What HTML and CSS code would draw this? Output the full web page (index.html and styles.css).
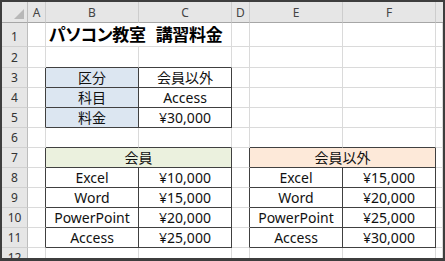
FILE: index.html
```html
<!DOCTYPE html>
<html lang="ja">
<head>
<meta charset="utf-8">
<link rel="stylesheet" href="styles.css">
</head>
<body>
<div class="sheet">
  <!-- header row -->
  <div class="ch corner"><span class="tri"></span></div>
  <div class="ch">A</div>
  <div class="ch">B</div>
  <div class="ch">C</div>
  <div class="ch">D</div>
  <div class="ch">E</div>
  <div class="ch">F</div>
  <div class="ch last"></div>

  <!-- row 1 -->
  <div class="rh">1</div>
  <div class="c"></div>
  <div class="c title span2">パソコン教室<span class="gap">　</span>講習料金</div>
  <div class="c"></div>
  <div class="c"></div>
  <div class="c"></div>
  <div class="c"></div>

  <!-- row 2 -->
  <div class="rh">2</div>
  <div class="c"></div>
  <div class="c kb"></div>
  <div class="c kb"></div>
  <div class="c"></div>
  <div class="c"></div>
  <div class="c"></div>
  <div class="c"></div>

  <!-- row 3 -->
  <div class="rh">3</div>
  <div class="c kr"></div>
  <div class="c k blue">区分</div>
  <div class="c k">会員以外</div>
  <div class="c"></div>
  <div class="c"></div>
  <div class="c"></div>
  <div class="c"></div>

  <!-- row 4 -->
  <div class="rh">4</div>
  <div class="c kr"></div>
  <div class="c k blue">科目</div>
  <div class="c k">Access</div>
  <div class="c"></div>
  <div class="c"></div>
  <div class="c"></div>
  <div class="c"></div>

  <!-- row 5 -->
  <div class="rh">5</div>
  <div class="c kr"></div>
  <div class="c k blue">料金</div>
  <div class="c k">¥30,000</div>
  <div class="c"></div>
  <div class="c"></div>
  <div class="c"></div>
  <div class="c"></div>

  <!-- row 6 -->
  <div class="rh">6</div>
  <div class="c"></div>
  <div class="c kb"></div>
  <div class="c kb"></div>
  <div class="c"></div>
  <div class="c kb"></div>
  <div class="c kb"></div>
  <div class="c"></div>

  <!-- row 7 -->
  <div class="rh">7</div>
  <div class="c kr"></div>
  <div class="c k green span2">会員</div>
  <div class="c kr"></div>
  <div class="c k peach span2">会員以外</div>
  <div class="c"></div>

  <!-- row 8 -->
  <div class="rh">8</div>
  <div class="c kr"></div>
  <div class="c k">Excel</div>
  <div class="c k">¥10,000</div>
  <div class="c kr"></div>
  <div class="c k">Excel</div>
  <div class="c k">¥15,000</div>
  <div class="c"></div>

  <!-- row 9 -->
  <div class="rh">9</div>
  <div class="c kr"></div>
  <div class="c k">Word</div>
  <div class="c k">¥15,000</div>
  <div class="c kr"></div>
  <div class="c k">Word</div>
  <div class="c k">¥20,000</div>
  <div class="c"></div>

  <!-- row 10 -->
  <div class="rh">10</div>
  <div class="c kr"></div>
  <div class="c k">PowerPoint</div>
  <div class="c k">¥20,000</div>
  <div class="c kr"></div>
  <div class="c k">PowerPoint</div>
  <div class="c k">¥25,000</div>
  <div class="c"></div>

  <!-- row 11 -->
  <div class="rh">11</div>
  <div class="c kr"></div>
  <div class="c k">Access</div>
  <div class="c k">¥25,000</div>
  <div class="c kr"></div>
  <div class="c k">Access</div>
  <div class="c k">¥30,000</div>
  <div class="c"></div>

  <!-- row 12 (partial) -->
  <div class="rh cut">12</div>
  <div class="c"></div>
  <div class="c"></div>
  <div class="c"></div>
  <div class="c"></div>
  <div class="c"></div>
  <div class="c"></div>
  <div class="c"></div>
</div>
</body>
</html>
```

FILE: styles.css
```css
html, body {
  margin: 0;
  padding: 0;
  background: #fff;
}

.sheet {
  box-sizing: border-box;
  width: 445px;
  height: 261px;
  border: 2px solid #3e3e3e;
  border-bottom-width: 3px;
  overflow: hidden;
  display: grid;
  grid-template-columns: 26px 18px 93px 93px 18px 93px 93px 1fr;
  grid-template-rows: 21px 24px 21px repeat(9, 20px) 1fr;
  font-family: "Noto Sans", "Noto Sans CJK JP", sans-serif;
  background: #fff;
}

.ch {
  box-sizing: border-box;
  background: #e6e6e6;
  border-right: 1px solid #cdcdcd;
  border-bottom: 1px solid #a6a6a6;
  color: #444;
  font-size: 12px;
  display: flex;
  align-items: center;
  justify-content: center;
  padding-top: 1px;
}

.ch.last {
  border-right: none;
}

.corner {
  position: relative;
  border-right-color: #bdbdbd;
}

.tri {
  position: absolute;
  right: 3px;
  bottom: 3px;
  width: 0;
  height: 0;
  border-left: 10px solid transparent;
  border-bottom: 10px solid #b8b8b8;
}

.rh {
  box-sizing: border-box;
  background: #e6e6e6;
  border-right: 1px solid #bdbdbd;
  border-bottom: 1px solid #d0d0d0;
  color: #333;
  font-size: 12px;
  display: flex;
  align-items: flex-end;
  justify-content: center;
  padding-bottom: 1px;
  line-height: 16px;
}

.rh.cut {
  align-items: flex-start;
  padding-top: 2px;
  border-bottom: none;
}

.c {
  box-sizing: border-box;
  border-right: 1px solid #dadada;
  border-bottom: 1px solid #dadada;
  font-size: 14px;
  color: #111;
  display: flex;
  align-items: center;
  justify-content: center;
  white-space: nowrap;
  line-height: 18px;
}

.span2 {
  grid-column: span 2;
}

.title {
  justify-content: flex-start;
  align-items: flex-end;
  padding-left: 3px;
  padding-bottom: 2px;
  font-family: "Noto Sans CJK JP", sans-serif;
  font-weight: bold;
  font-size: 17px;
  color: #000;
  font-feature-settings: "palt";
  letter-spacing: -0.3px;
  line-height: 20px;
}

.gap {
  letter-spacing: -7px;
}

.k {
  border-right-color: #404040;
  border-bottom-color: #404040;
}

.kr {
  border-right-color: #404040;
}

.kb {
  border-bottom-color: #404040;
}

.blue {
  background: #dce6f1;
}

.green {
  background: #ebf1de;
}

.peach {
  background: #fde9d9;
}
```
